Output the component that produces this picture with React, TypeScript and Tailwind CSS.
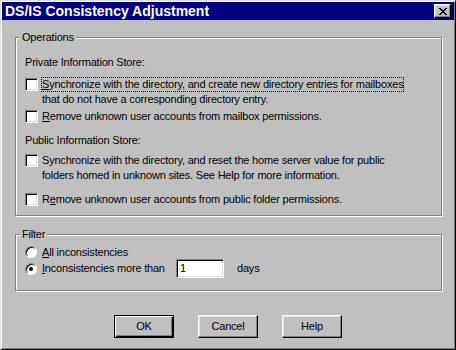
import React from "react";

function Check({ children }: { children: React.ReactNode }) {
  return (
    <div className="flex items-start gap-[3px]">
      <span className="mt-[1px] w-[13px] h-[13px] shrink-0 bg-white border border-t-[#808080] border-l-[#808080] border-b-white border-r-white shadow-[inset_1px_1px_#000,inset_-1px_-1px_#dfdfdf]" />
      <div className="flex flex-col">{children}</div>
    </div>
  );
}

function Radio({ on }: { on?: boolean }) {
  return (
    <span className="w-[12px] h-[12px] shrink-0 rounded-full bg-white border border-t-[#808080] border-l-[#808080] border-b-white border-r-white shadow-[inset_1px_1px_#000] flex items-center justify-center">
      {on ? <span className="w-[4px] h-[4px] rounded-full bg-black" /> : null}
    </span>
  );
}

function Btn({ children, def }: { children: React.ReactNode; def?: boolean }) {
  return (
    <div
      className={
        def
          ? "w-[60px] h-[23px] flex items-center justify-center border border-black shadow-[inset_1px_1px_#fff,inset_-1px_-1px_#000,inset_-2px_-2px_#808080]"
          : "w-[60px] h-[23px] flex items-center justify-center border border-t-white border-l-white border-r-black border-b-black shadow-[inset_-1px_-1px_#808080,inset_1px_1px_#dfdfdf]"
      }
    >
      {children}
    </div>
  );
}

export default function App() {
  const xRows = [
    "XX....XX",
    ".XX..XX.",
    "..XXXX..",
    "...XX...",
    "..XXXX..",
    ".XX..XX.",
    "XX....XX",
  ];
  return (
    <div className="w-[456px] h-[350px] bg-[#c0c0c0] border border-t-[#dfdfdf] border-l-[#dfdfdf] border-r-black border-b-black shadow-[inset_1px_1px_#fff,inset_-1px_-1px_#808080] p-[1px] flex flex-col font-['Liberation_Sans',Arial,sans-serif] text-[11px] text-black">
      {/* title bar */}
      <div className="h-[18px] bg-[#000080] flex items-center justify-between pl-[3px]">
        <span className="text-white font-bold text-[14px] leading-[18px]">DS/IS Consistency Adjustment</span>
        <div className="mr-[3px] w-[17px] h-[14px] bg-[#c0c0c0] border border-t-white border-l-white border-r-black border-b-black shadow-[inset_-1px_-1px_#808080,inset_1px_1px_#dfdfdf] flex items-center justify-center">
          <svg width="8" height="7" viewBox="0 0 8 7" shapeRendering="crispEdges">
            {xRows.map((r, y) =>
              r.split("").map((c, x) => (c === "X" ? <rect key={`${x}-${y}`} x={x} y={y} width="1" height="1" fill="#000" /> : null))
            )}
          </svg>
        </div>
      </div>

      <div className="tracking-[-0.2px] leading-[15px]">
        {/* Operations group */}
        <div className="relative mt-[17px] ml-[13px] mr-[12px] h-[179px] border border-[#808080] shadow-[inset_1px_1px_#fff,1px_1px_#fff] pt-[17px] pl-[9px]">
          <span className="absolute -top-[8px] left-[4px] px-[2px] bg-[#c0c0c0] leading-[14px]">Operations</span>
          <div>Private Information Store:</div>
          <div className="mt-[7px]">
            <Check>
              <span className="inline-block px-[1px] outline-1 outline-dotted outline-black -outline-offset-1 w-fit">
                <u>S</u>ynchronize with the directory, and create new directory entries for mailboxes
              </span>
              <span className="px-[1px]">that do not have a corresponding directory entry.</span>
            </Check>
          </div>
          <div className="mt-[2px]">
            <Check>
              <span className="px-[1px]">
                <u>R</u>emove unknown user accounts from mailbox permissions.
              </span>
            </Check>
          </div>
          <div className="mt-[9px]">Public Information Store:</div>
          <div className="mt-[5px]">
            <Check>
              <span className="px-[1px]">Synchronize with the directory, and reset the home server value for public</span>
              <span className="px-[1px]">folders homed in unknown sites. See Help for more information.</span>
            </Check>
          </div>
          <div className="mt-[9px]">
            <Check>
              <span className="px-[1px]">
                R<u>e</u>move unknown user accounts from public folder permissions.
              </span>
            </Check>
          </div>
        </div>

        {/* Filter group */}
        <div className="relative mt-[18px] ml-[13px] mr-[12px] h-[57px] border border-[#808080] shadow-[inset_1px_1px_#fff,1px_1px_#fff] pt-[10px] pl-[9px]">
          <span className="absolute -top-[8px] left-[4px] px-[2px] bg-[#c0c0c0] leading-[14px]">Filter</span>
          <div className="flex items-center gap-[5px] h-[14px]">
            <Radio />
            <span>
              <u>A</u>ll inconsistencies
            </span>
          </div>
          <div className="flex items-center gap-[5px] h-[19px]">
            <Radio on />
            <span className="w-[129px]">
              <u>I</u>nconsistencies more than
            </span>
            <div className="w-[48px] h-[19px] bg-white border border-t-[#808080] border-l-[#808080] border-b-white border-r-white shadow-[inset_1px_1px_#000,inset_-1px_-1px_#dfdfdf] pl-[3px] flex items-center">
              1
            </div>
            <span className="ml-[8px]">days</span>
          </div>
        </div>

        {/* buttons */}
        <div className="mt-[24px] flex justify-center gap-[24px]">
          <Btn def>OK</Btn>
          <Btn>Cancel</Btn>
          <Btn>Help</Btn>
        </div>
      </div>
    </div>
  );
}
